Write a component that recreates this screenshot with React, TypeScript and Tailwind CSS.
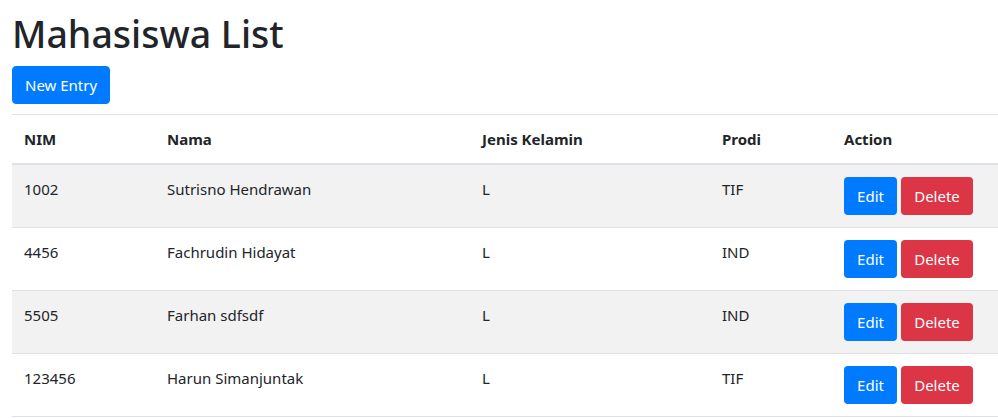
import React from "react";

const rows = [
  { nim: "1002", nama: "Sutrisno Hendrawan", jk: "L", prodi: "TIF" },
  { nim: "4456", nama: "Fachrudin Hidayat", jk: "L", prodi: "IND" },
  { nim: "5505", nama: "Farhan sdfsdf", jk: "L", prodi: "IND" },
  { nim: "123456", nama: "Harun Simanjuntak", jk: "L", prodi: "TIF" },
];

export default function App() {
  return (
    <div
      className="w-[998px] h-[418px] overflow-hidden bg-white text-[#212529]"
      style={{ fontFamily: '"Noto Sans", "Open Sans", sans-serif' }}
    >
      <div className="pl-[12px] pt-[10px] w-[1122px]">
        <h1 className="text-[37.5px] leading-[48px] font-medium mb-[8px]">Mahasiswa List</h1>
        <button className="bg-[#007bff] text-white text-[15px] leading-[24px] px-[12px] py-[6px] rounded-[4px] border border-[#007bff]">
          New Entry
        </button>
        <table className="mt-[10px] table-fixed w-[1110px] border-collapse text-[15px] leading-[24px]">
          <colgroup>
            <col className="w-[143px]" />
            <col className="w-[315px]" />
            <col className="w-[240px]" />
            <col className="w-[122px]" />
            <col className="w-[290px]" />
          </colgroup>
          <thead>
            <tr className="border-t border-[#dee2e6] border-b-2">
              <th className="text-left font-bold p-[12px] align-bottom">NIM</th>
              <th className="text-left font-bold p-[12px] align-bottom">Nama</th>
              <th className="text-left font-bold p-[12px] align-bottom">Jenis Kelamin</th>
              <th className="text-left font-bold p-[12px] align-bottom">Prodi</th>
              <th className="text-left font-bold p-[12px] align-bottom">Action</th>
            </tr>
          </thead>
          <tbody>
            {rows.map((r, i) => (
              <tr
                key={r.nim}
                className={`border-t border-b border-[#dee2e6] ${i % 2 === 0 ? "bg-[#f2f2f2]" : "bg-white"}`}
              >
                <td className="p-[12px] align-top">{r.nim}</td>
                <td className="p-[12px] align-top">{r.nama}</td>
                <td className="p-[12px] align-top">{r.jk}</td>
                <td className="p-[12px] align-top">{r.prodi}</td>
                <td className="p-[12px] align-top">
                  <div className="flex gap-[4px]">
                    <button className="w-[53px] h-[38px] bg-[#007bff] text-white text-[15px] rounded-[4px]">Edit</button>
                    <button className="w-[72px] h-[38px] bg-[#dc3545] text-white text-[15px] rounded-[4px]">Delete</button>
                  </div>
                </td>
              </tr>
            ))}
          </tbody>
        </table>
      </div>
    </div>
  );
}
